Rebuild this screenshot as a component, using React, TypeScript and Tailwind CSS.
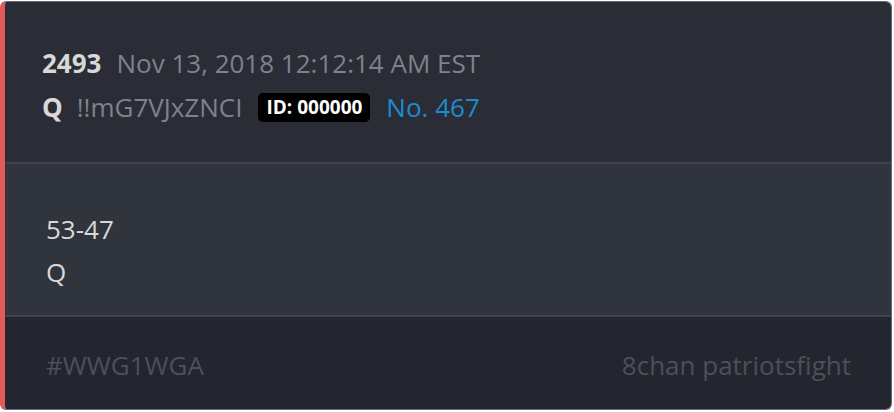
export default function App() {
  return (
    <div className="w-[894px] h-[412px] bg-[#ffffff] pt-[1px]" style={{ fontFamily: '"Open Sans", sans-serif' }}>
      <div className="w-[892px] h-[409px] flex flex-col overflow-hidden rounded-[6px] border border-[#666b76] border-l-[5px] border-l-[#e35a5a]">
        <div className="h-[160px] shrink-0 bg-[#2a2d35] pl-[37px] pt-[39px]">
          <div className="flex items-baseline gap-[15px] text-[26px] leading-[44px]">
            <span className="font-bold text-[#d8d8d8]">2493</span>
            <span className="text-[#7d828e]">Nov 13, 2018 12:12:14 AM EST</span>
          </div>
          <div className="flex items-center text-[26px] leading-[44px]">
            <span className="font-bold text-[#d8d8d8]">Q</span>
            <span className="ml-[14px] text-[#7d828e]">!!mG7VJxZNCI</span>
            <span className="ml-[16px] rounded-[5px] bg-black px-[8px] text-[19px] font-bold leading-[29px] text-white">ID: 000000</span>
            <span className="ml-[16px] text-[#1d8bd1]">No. 467</span>
          </div>
        </div>
        <div className="h-[2px] shrink-0 bg-[#3e434d]" />
        <div className="h-[151px] shrink-0 bg-[#2f343d] pl-[41px] pt-[44px] text-[26px] leading-[43px] text-[#d9d9d9]">
          <div>53-47</div>
          <div>Q</div>
        </div>
        <div className="h-[2px] shrink-0 bg-[#3e434d]" />
        <div className="flex flex-1 justify-between bg-[#23262e] pl-[41px] pr-[40px] pt-[27px] text-[26px] leading-[43px] text-[#4b505b]">
          <span>#WWG1WGA</span>
          <span>8chan patriotsfight</span>
        </div>
      </div>
    </div>
  );
}
